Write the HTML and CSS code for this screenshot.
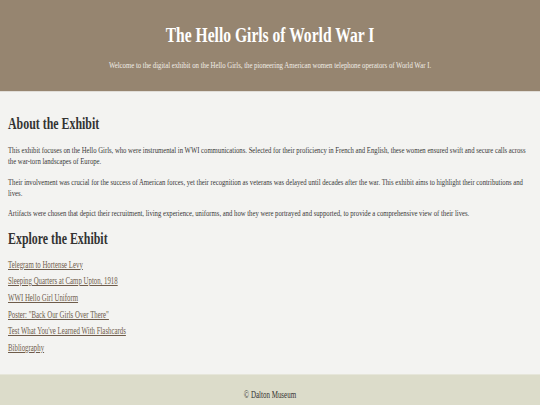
FILE: index.html
```html
<!DOCTYPE html>
<html lang="en">
<head>
<meta charset="utf-8">
<title>The Hello Girls of World War I</title>
<link rel="stylesheet" href="styles.css">
</head>
<body>
<div class="frame">
<div class="page">
  <header class="site-header">
    <h1 class="title">The Hello Girls of World War I</h1>
    <p class="subtitle">Welcome to the digital exhibit on the Hello Girls, the pioneering American women telephone operators of World War I.</p>
  </header>
  <main class="content">
    <section class="about">
      <h2 class="section-title">About the Exhibit</h2>
      <p>This exhibit focuses on the Hello Girls, who were instrumental in WWI communications. Selected for their proficiency in French and English, these women ensured swift and secure calls across the war-torn landscapes of Europe.</p>
      <p>Their involvement was crucial for the success of American forces, yet their recognition as veterans was delayed until decades after the war. This exhibit aims to highlight their contributions and lives.</p>
      <p>Artifacts were chosen that depict their recruitment, living experience, uniforms, and how they were portrayed and supported, to provide a comprehensive view of their lives.</p>
    </section>
    <section class="explore">
      <h2 class="section-title">Explore the Exhibit</h2>
      <ul class="links">
        <li><a href="#">Telegram to Hortense Levy</a></li>
        <li><a href="#">Sleeping Quarters at Camp Upton, 1918</a></li>
        <li><a href="#">WWI Hello Girl Uniform</a></li>
        <li><a href="#">Poster: "Back Our Girls Over There"</a></li>
        <li><a href="#">Test What You've Learned With Flashcards</a></li>
        <li><a href="#">Bibliography</a></li>
      </ul>
    </section>
  </main>
  <footer class="site-footer">
    <p>&copy; Dalton Museum</p>
  </footer>
</div>
</div>
</body>
</html>
```
FILE: styles.css
```css
html, body {
  margin: 0;
  padding: 0;
  background: #f3f3f1;
  overflow: hidden;
}
.frame {
  width: 540px;
  height: 405px;
  overflow: hidden;
}
.page {
  width: 734.7px;
  height: 405px;
  transform: scaleX(0.735);
  transform-origin: 0 0;
  display: flex;
  flex-direction: column;
  font-family: "Liberation Serif", "Times New Roman", serif;
  color: #383838;
}
.site-header {
  background: #968570;
  color: #fff;
  text-align: center;
  height: 92px;
  box-sizing: border-box;
  padding-top: 21px;
  border-bottom: 1px solid #e0ddd8;
}
.title {
  margin: 0;
  font-size: 21.2px;
  font-weight: bold;
  line-height: 28px;
}
.subtitle {
  margin: 11px 0 0;
  font-size: 9.2px;
  line-height: 11px;
  color: #f1ede6;
}
.content {
  flex: 1;
  padding: 22px 10.9px 0;
}
.section-title {
  margin: 0 0 11px;
  font-size: 16.2px;
  font-weight: bold;
  line-height: 20px;
  color: #333;
}
.about p {
  margin: 0 0 9.5px;
  font-size: 9.1px;
  line-height: 11px;
}
.explore {
  margin-top: 9px;
}
.links {
  list-style: none;
  margin: 0;
  padding: 0;
}
.links li {
  font-size: 9.3px;
  line-height: 11px;
  margin-bottom: 5.7px;
}
.links a {
  color: #6e5c4b;
  text-decoration: underline;
}
.site-footer {
  background: #dcdcca;
  height: 30px;
  text-align: center;
  border-top: 1px solid #e6e6da;
}
.site-footer p {
  margin: 15px 0 0;
  font-size: 9.5px;
  line-height: 11px;
  color: #333;
}
```
